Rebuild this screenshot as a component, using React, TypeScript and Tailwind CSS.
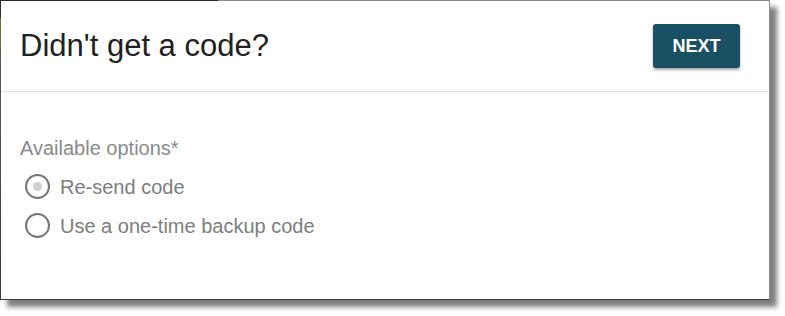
import React from "react";

function Radio({ checked, label }: { checked?: boolean; label: string }) {
  return (
    <div className="flex h-[39px] items-center">
      <div className="ml-[5px] flex h-[25px] w-[25px] items-center justify-center rounded-full border-[2.5px] border-[#757575]">
        {checked && <div className="h-[9px] w-[9px] rounded-full bg-[#cfcfcf]" />}
      </div>
      <span className="ml-[10px] text-[20px] leading-[24px] text-[#7d7d7d]">{label}</span>
    </div>
  );
}

export default function App() {
  return (
    <div
      className="h-[316px] w-[785px] bg-white"
      style={{ fontFamily: '"Liberation Sans", Arial, sans-serif' }}
    >
      <div className="flex h-[300px] w-[770px] bg-white shadow-[7px_7px_5px_rgba(0,0,0,0.5)]">
        <div className="w-px bg-[linear-gradient(to_bottom,#2e2e2e_0px,#2e2e2e_18px,#7a6b2c_18px,#7a6b2c_50px,#5a5a5a_50px,#3a3a3a_100%)]" />
        <div className="flex flex-1 flex-col border-b border-r border-b-[#3c3c3c] border-r-[#8f8f8f]">
          <div className="flex h-px">
            <div className="w-[217px] bg-[#2a2a2a]" />
            <div className="flex-1 bg-[#8a8a8a]" />
          </div>
          <div className="flex h-[91px] items-center justify-between border-b border-[#e0e0e0] pl-[19px] pr-[29px]">
            <h1 className="text-[31px] leading-[36px] text-[#212121]">Didn't get a code?</h1>
            <button className="flex h-[44px] w-[87px] items-center justify-center rounded-[3px] bg-[#1a5064] text-[18px] font-bold text-white shadow-[0_2px_3px_rgba(0,0,0,0.35)]">
              NEXT
            </button>
          </div>
          <div className="flex flex-col pl-[19px] pt-[44px]">
            <div className="mb-[7px] text-[20px] leading-[24px] text-[#8a8a8a]">Available options*</div>
            <Radio checked label="Re-send code" />
            <Radio label="Use a one-time backup code" />
          </div>
        </div>
      </div>
    </div>
  );
}
